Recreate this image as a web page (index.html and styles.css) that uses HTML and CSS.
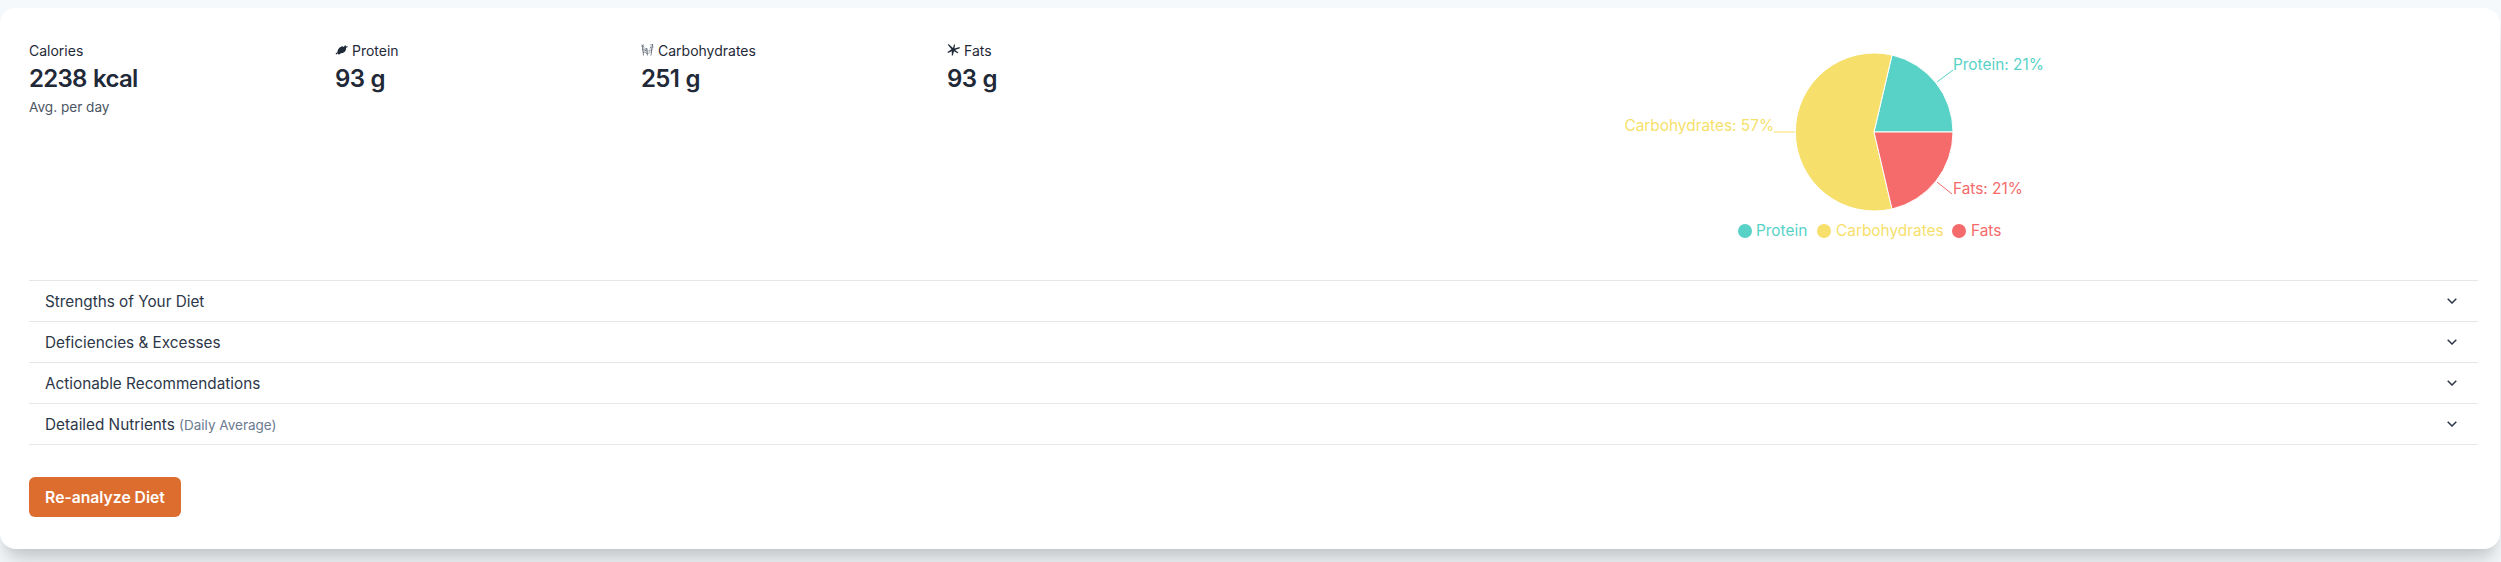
FILE: index.html
```html
<!DOCTYPE html>
<html lang="en">
<head>
<meta charset="utf-8">
<title>Diet analysis</title>
<link rel="stylesheet" href="styles.css">
</head>
<body>
<main class="card">
  <section class="summary">
    <div class="stats">
      <div class="stat">
        <div class="stat-label">Calories</div>
        <div class="stat-value">2238 kcal</div>
        <div class="stat-note">Avg. per day</div>
      </div>
      <div class="stat">
        <div class="stat-label">
          <svg class="icon" viewBox="0 0 13 13"><path d="M.5 10.500l1.800-1.300.7.800-1.500 1.500zM2.500 9C2.500 6.500 4.800 3.800 7.500 3.300l1.300.8L10 2.300l1 .5-.4 1 1.700-.8.400 1-1.800 1 .2 1.200C10.500 8.800 8.300 10.200 6 10.200L4.800 11l-.8.800-1-.8z"/></svg>
          Protein
        </div>
        <div class="stat-value">93 g</div>
      </div>
      <div class="stat">
        <div class="stat-label">
          <svg class="icon" viewBox="0 0 13 13"><g class="wheat"><path d="M2.500 12.500L1.500 2M6.500 12.500L5.500 5M10 12.500L11.500 1"/><path class="wheat-dots" d="M.5 2h2.500M.5 3.500h3M1 5h3M1 6.500h3.500M1.500 8h3M2 9.500h3M4 6h3M4 7.500h3.500M4.500 9h3.500M5 10.500h3M9.500 1.500h3M9.500 3h3.500M9 4.500h3.500M8.500 6h3.500M8.500 7.500h3M8 9h3"/></g></svg>
          Carbohydrates
        </div>
        <div class="stat-value">251 g</div>
      </div>
      <div class="stat">
        <div class="stat-label">
          <svg class="icon" viewBox="0 0 13 13"><path d="M1.500 1L6 5 7 1.500h1L7.500 5.500 12.500 4l.4 1.300L8 7l3.500 2.500-.8.800L7 8.300 5.800 12.500H4.800L4.800 8.300 1 10l-.5-1L4.500 6.300.8 1.800z"/></svg>
          Fats
        </div>
        <div class="stat-value">93 g</div>
      </div>
    </div>
    <div class="chart">
      <svg class="pie" viewBox="0 0 1224 240" width="1224" height="240">
        <g class="slices">
          <path class="protein" d="M620 95 L699 95 A79 79 0 0 0 638 18 Z"/>
          <path class="carbs" d="M620 95 L638 18 A79 79 0 1 0 638 172 Z"/>
          <path class="fats" d="M620 95 L638 172 A79 79 0 0 0 699 95 Z"/>
        </g>
        <polyline class="lead lead-protein" points="683,45 699,33"/>
        <polyline class="lead lead-carbs" points="541,95 520,95"/>
        <polyline class="lead lead-fats" points="683,145 698,157"/>
        <text class="label t-protein" x="699" y="33">Protein: 21%</text>
        <text class="label t-carbs" x="520" y="94" text-anchor="end">Carbohydrates: 57%</text>
        <text class="label t-fats" x="699" y="157">Fats: 21%</text>
        <circle class="protein" cx="491" cy="194" r="7"/>
        <text class="label t-protein" x="502" y="199">Protein</text>
        <circle class="carbs" cx="570" cy="194" r="7"/>
        <text class="label t-carbs" x="582" y="199">Carbohydrates</text>
        <circle class="fats" cx="705" cy="194" r="7"/>
        <text class="label t-fats" x="717" y="199">Fats</text>
      </svg>
    </div>
  </section>
  <section class="accordion">
    <div class="row"><span class="row-title">Strengths of Your Diet</span><svg class="chevron" viewBox="0 0 10 6"><path d="M.7.8L5 5 9.300.8"/></svg></div>
    <div class="row"><span class="row-title">Deficiencies &amp; Excesses</span><svg class="chevron" viewBox="0 0 10 6"><path d="M.7.8L5 5 9.300.8"/></svg></div>
    <div class="row"><span class="row-title">Actionable Recommendations</span><svg class="chevron" viewBox="0 0 10 6"><path d="M.7.8L5 5 9.300.8"/></svg></div>
    <div class="row"><span class="row-title">Detailed Nutrients <small class="row-sub">(Daily Average)</small></span><svg class="chevron" viewBox="0 0 10 6"><path d="M.7.8L5 5 9.300.8"/></svg></div>
  </section>
  <button class="action" type="button">Re-analyze Diet</button>
</main>
</body>
</html>
```
FILE: styles.css
```css
* { box-sizing: border-box; }
html, body { height: 100%; }
body {
  margin: 0;
  padding-top: 8px;
  background: #f5f9fb;
  font-family: Inter, "Liberation Sans", sans-serif;
  color: #1f2937;
  overflow: hidden;
}
.card {
  width: 2500px;
  height: 541px;
  padding: 29px 22px 32px 29px;
  background: #fff;
  border-radius: 16px;
  box-shadow: 0 20px 25px -5px rgba(0,0,0,.14), 0 10px 10px -5px rgba(0,0,0,.08);
}
.summary { display: flex; height: 243px; }
.stats {
  width: 1225px;
  display: grid;
  grid-template-columns: repeat(4, 306px);
  align-content: start;
  padding-top: 4px;
}
.stat-label {
  display: flex;
  align-items: center;
  gap: 4px;
  height: 20px;
  font-size: 14px;
  line-height: 20px;
  color: #1f2937;
}
.icon { width: 13px; height: 13px; fill: #1f2937; flex: none; margin-top: -3px; }
.wheat { fill: none; stroke: #4b5563; stroke-width: .7; }
.wheat-dots { stroke-dasharray: 1 .6; }
.stat-value {
  margin-top: 2px;
  font-size: 24px;
  line-height: 32px;
  font-weight: 600;
  letter-spacing: -.7px;
  word-spacing: 1px;
  color: #1f2937;
}
.stat-note { margin-top: 2px; font-size: 13.6px; line-height: 20px; color: #4b5563; }
.chart { flex: 1; }
.pie { display: block; }
.slices path { stroke: #fff; stroke-width: 1; }
.protein { fill: #58d2c7; }
.carbs { fill: #f6df6b; }
.fats { fill: #f56a6b; }
.lead { fill: none; stroke-width: 1; }
.lead-protein { stroke: #58d2c7; }
.lead-carbs { stroke: #f6df6b; }
.lead-fats { stroke: #f56a6b; }
.label { font-size: 15.4px; }
.t-protein { fill: #58d2c7; }
.t-carbs { fill: #f6df6b; }
.t-fats { fill: #f56a6b; }
.accordion { border-top: 1px solid #e5e7eb; }
.row {
  display: flex;
  align-items: center;
  justify-content: space-between;
  height: 41px;
  padding: 0 21px 0 16px;
  border-bottom: 1px solid #e5e7eb;
}
.row-title { font-size: 15.3px; color: #2d3748; }
.row-sub { font-size: 13.5px; color: #6b7a90; }
.chevron { width: 10px; height: 6px; fill: none; stroke: #2d3748; stroke-width: 1.5; }
.action {
  display: block;
  margin-top: 32px;
  width: 152px;
  height: 40px;
  border: 0;
  border-radius: 6px;
  background: #dc6d2f;
  color: #fff;
  font: 600 15.7px Inter, "Liberation Sans", sans-serif;
}
```
